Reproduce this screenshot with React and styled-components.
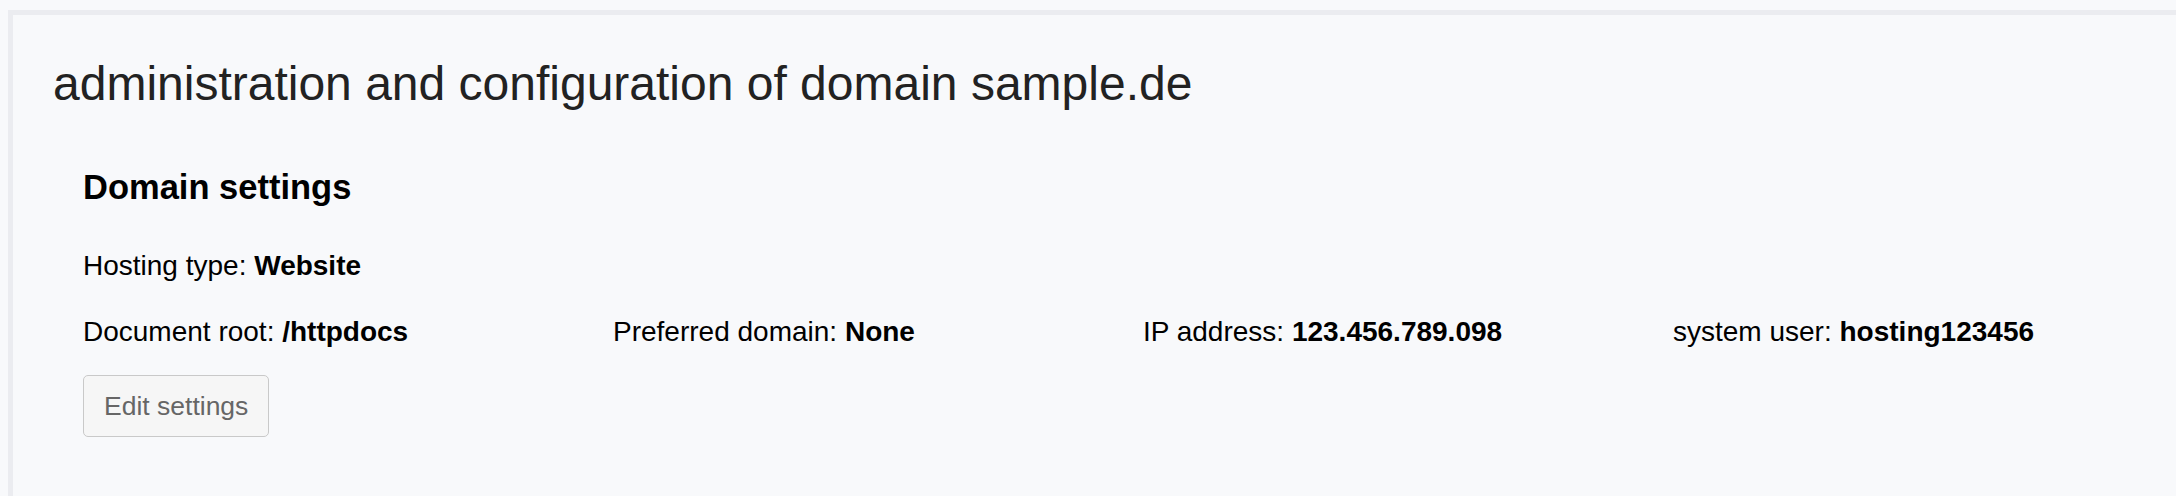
import styled, { createGlobalStyle } from "styled-components";

const GlobalStyle = createGlobalStyle`
  html, body {
    margin: 0;
    padding: 0;
    background: #f8f9fb;
    overflow: hidden;
  }
  body {
    font-family: "Liberation Sans", Arial, Helvetica, sans-serif;
    color: #000;
  }
`;

const domain = {
  name: "sample.de",
  hostingType: "Website",
  details: [
    { label: "Document root", value: "/httpdocs" },
    { label: "Preferred domain", value: "None" },
    { label: "IP address", value: "123.456.789.098" },
    { label: "system user", value: "hosting123456" },
  ],
};

function App() {
  return (
    <>
      <GlobalStyle />
      <Page>
        <Panel>
          <Title>administration and configuration of domain {domain.name}</Title>
          <Section>
            <SectionTitle>Domain settings</SectionTitle>
            <InfoLine>
              Hosting type: <strong>{domain.hostingType}</strong>
            </InfoLine>
            <InfoGrid>
              {domain.details.map((d) => (
                <InfoLine key={d.label}>
                  {d.label}: <strong>{d.value}</strong>
                </InfoLine>
              ))}
            </InfoGrid>
            <EditButton type="button">Edit settings</EditButton>
          </Section>
        </Panel>
      </Page>
    </>
  );
}

const Page = styled.div`
  padding: 10px 0 0 8px;
  min-height: 486px;
  box-sizing: border-box;
`;

const Panel = styled.div`
  border-top: 5px solid #ebecf0;
  border-left: 5px solid #ebecf0;
  background: #f8f9fb;
  padding: 40px 0 60px 40px;
  min-height: 440px;
  box-sizing: border-box;
`;

const Title = styled.h1`
  margin: 0;
  font-size: 48px;
  line-height: 58px;
  font-weight: 400;
  color: #222;
`;

const Section = styled.div`
  padding-left: 30px;
  margin-top: 54px;
`;

const SectionTitle = styled.h2`
  margin: 0 0 42px;
  font-size: 34.5px;
  line-height: 40px;
  font-weight: 700;
`;

const InfoLine = styled.div`
  font-size: 28px;
  line-height: 34px;
  white-space: nowrap;

  strong {
    font-weight: 700;
  }
`;

const InfoGrid = styled.div`
  display: grid;
  grid-template-columns: repeat(3, 530px) auto;
  margin-top: 32px;
`;

const EditButton = styled.button`
  display: block;
  margin-top: 26px;
  height: 62px;
  padding: 0 20px;
  font-family: "Liberation Sans", Arial, Helvetica, sans-serif;
  font-size: 26.5px;
  color: #666;
  background: #f6f6f6;
  border: 1.5px solid #c9c9c9;
  border-radius: 5px;
  cursor: pointer;
`;

export default App;
